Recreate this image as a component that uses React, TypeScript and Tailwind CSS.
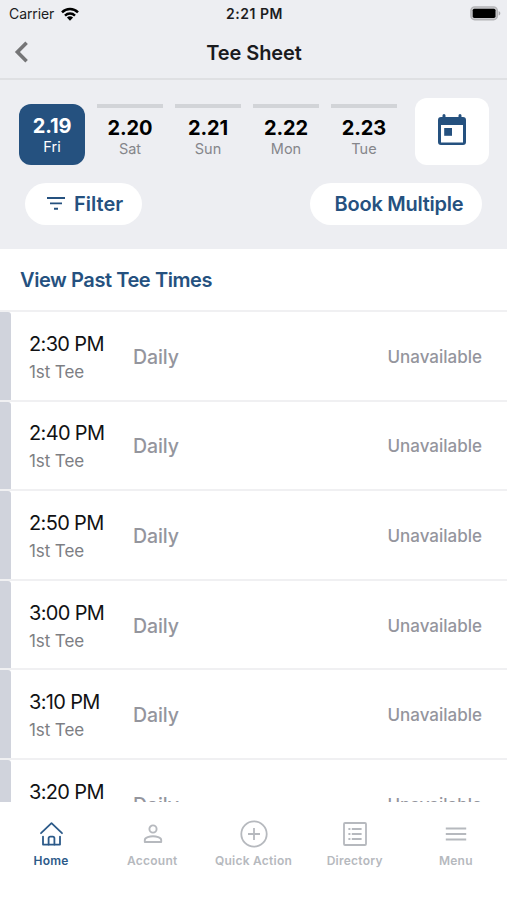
import clsx from "clsx";
import type { ReactNode } from "react";

const days = [
  { date: "2.19", day: "Fri" },
  { date: "2.20", day: "Sat" },
  { date: "2.21", day: "Sun" },
  { date: "2.22", day: "Mon" },
  { date: "2.23", day: "Tue" },
];

const teeTimes = ["2:30 PM", "2:40 PM", "2:50 PM", "3:00 PM", "3:10 PM", "3:20 PM"];

const tabs: { label: string; icon: ReactNode }[] = [
  {
    label: "Home",
    icon: (
      <svg width="28" height="28" viewBox="0 0 28 28" fill="none" stroke="currentColor" strokeWidth="1.8" strokeLinecap="round" strokeLinejoin="round">
        <path d="M3 13.2 13.5 3.2l10.500 10" />
        <path d="M5 16.6v8h5.600v-6.400a1.600 1.600 0 0 1 1.600-1.600h2.600a1.600 1.600 0 0 1 1.600 1.600v6.400h5.600v-8" />
        <path d="M10.6 24.6h5.800" />
      </svg>
    ),
  },
  {
    label: "Account",
    icon: (
      <svg width="28" height="28" viewBox="0 0 28 28" fill="none" stroke="currentColor" strokeWidth="1.9">
        <circle cx="14" cy="9" r="3.6" />
        <path d="M5.8 22v-2c0-2.6 5.1-3.8 8.2-3.8s8.2 1.2 8.2 3.8v2z" strokeLinejoin="round" />
      </svg>
    ),
  },
  {
    label: "Quick Action",
    icon: (
      <svg width="28" height="28" viewBox="0 0 28 28" fill="none" stroke="currentColor" strokeWidth="1.8">
        <circle cx="14" cy="14" r="12.7" />
        <path d="M14 8v12M8 14h12" />
      </svg>
    ),
  },
  {
    label: "Directory",
    icon: (
      <svg width="28" height="28" viewBox="0 0 28 28" fill="none" stroke="currentColor" strokeWidth="1.8">
        <rect x="3" y="3" width="22" height="22" rx="1" />
        <path d="M7.4 9h2M7.4 14h2M7.4 19h2M10.8 9h9.8M10.8 14h9.8M10.8 19h9.8" />
      </svg>
    ),
  },
  {
    label: "Menu",
    icon: (
      <svg width="28" height="28" viewBox="0 0 28 28" fill="none" stroke="currentColor" strokeWidth="2">
        <path d="M3.8 8.4h20.4M3.8 14h20.4M3.8 19.6h20.4" />
      </svg>
    ),
  },
];

function StatusBar() {
  return (
    <div className="grid h-7 grid-cols-3 items-center pr-[6px] pl-[9px] text-[#1c1c1e]">
      <div className="-mt-px flex items-center gap-[7px]">
        <span className="text-[14px] tracking-[-0.1px]">Carrier</span>
        <svg width="18" height="14" viewBox="0 0 18 14" fill="none" stroke="#000" strokeWidth="2.5">
          <path d="M1 5.3a11.6 11.6 0 0 1 16 0" />
          <path d="M4 8.6a7.3 7.3 0 0 1 10 0" />
          <path d="M9 13.8 5.9 10.6a4.5 4.5 0 0 1 6.2 0z" fill="#000" stroke="none" />
        </svg>
      </div>
      <span className="-mt-px -mr-px ml-[-2px] text-center text-[14px] font-semibold tracking-[0.5px]">2:21 PM</span>
      <svg className="-mt-px justify-self-end" width="31" height="15" viewBox="0 0 31 15">
        <rect x="0.9" y="0.9" width="26.4" height="12.8" rx="3.8" fill="#c9c9cc" stroke="#b3b3b6" strokeWidth="1.4" />
        <rect x="2.7" y="2.7" width="22.8" height="9.2" rx="1.6" fill="#000" />
        <path d="M28.6 5v4.6c1-.4 1.7-1.3 1.7-2.3s-.7-1.9-1.7-2.3z" fill="#a9a9ac" />
      </svg>
    </div>
  );
}

function TitleBar() {
  return (
    <header className="relative flex h-[52px] items-center justify-center border-b-2 border-[#dfe0e3]">
      <button className="absolute top-[13px] left-[14px]" aria-label="Back">
        <svg width="16" height="22" viewBox="0 0 16 22" fill="none" stroke="#757577" strokeWidth="3.6">
          <path d="M12.6 1.8 3.4 11l9.2 9.2" />
        </svg>
      </button>
      <h1 className="pl-px text-[20px] font-semibold tracking-[-0.1px] text-[#1a1b1e]">Tee Sheet</h1>
    </header>
  );
}

function DayPicker() {
  return (
    <div className="flex pt-[17.5px] pl-[19px]">
      <div className="flex gap-3 pt-[6px]">
        {days.map((d, i) => (
          <button
            key={d.date}
            className={clsx(
              "flex h-[61px] w-[66px] flex-col items-center",
              i === 0
                ? "rounded-[12px] bg-[#25517f] pt-[10px] text-white"
                : "border-t-4 border-[#d2d4d8] pt-[8px] text-black",
            )}
          >
            <span className="text-[20px] leading-6 font-bold tracking-[-0.1px]">{d.date}</span>
            <span className={clsx("text-[14.5px] leading-[18px]", i === 0 ? "text-white" : "text-[#85868b]")}>
              {d.day}
            </span>
          </button>
        ))}
      </div>
      <button className="ml-[18px] flex h-[67px] w-[74px] items-center justify-center rounded-[12px] bg-white pb-[3px]" aria-label="Calendar">
        <svg width="28" height="31" viewBox="0 0 28 31" fill="#25517f">
          <path
            fillRule="evenodd"
            d="M6 0a1.5 1.5 0 0 1 1.5 1.5V3h13V1.5a1.5 1.5 0 0 1 3 0V3H25a3 3 0 0 1 3 3v22a3 3 0 0 1-3 3H3a3 3 0 0 1-3-3V6a3 3 0 0 1 3-3h1.5V1.5A1.5 1.5 0 0 1 6 0zM3 11v17.5h22V11z"
          />
          <path d="M6.2 14h7.8v7.8H6.2z" />
        </svg>
      </button>
    </div>
  );
}

function Actions() {
  return (
    <div className="mt-[18px] flex justify-between pr-[25px] pl-[25px] text-[20px] font-semibold text-[#25517f]">
      <button className="flex h-[42px] w-[117px] items-center gap-[9px] rounded-full bg-white pl-[22px]">
        <svg width="18" height="13" viewBox="0 0 18 13" fill="none" stroke="currentColor" strokeWidth="1.9">
          <path d="M0 1h18M3 6.4h12M7 11.8h4" />
        </svg>
        Filter
      </button>
      <button className="h-[42px] w-[172px] rounded-full bg-white pl-[6px] tracking-[-0.25px] whitespace-nowrap">
        Book Multiple
      </button>
    </div>
  );
}

function TeeTimeRow({ time }: { time: string }) {
  return (
    <li className="flex h-[89.6px] shrink-0 border-t-2 border-[#f0f0f2]">
      <div className="w-[11px] rounded-tr-[3px] bg-[#d0d3dc]" />
      <div className="flex flex-1 pr-[25px] pl-[18px]">
        <div className="w-[104px] pt-[17.9px]">
          <p className="text-[20px] leading-7 tracking-[-0.65px] text-[#111214]">{time}</p>
          <p className="text-[17px] leading-7 tracking-[-0.1px] text-[#7d7e83]">1st Tee</p>
        </div>
        <p className="pt-[30.9px] text-[19.5px] leading-7 font-medium tracking-[-0.1px] text-[#94959d]">Daily</p>
        <p className="ml-auto pt-[30.9px] text-[17px] leading-7 font-medium text-[#94959d]">Unavailable</p>
      </div>
    </li>
  );
}

function TabBar() {
  return (
    <nav className="grid h-[98px] grid-cols-5 bg-white pt-[18px] pl-px">
      {tabs.map((tab, i) => (
        <button
          key={tab.label}
          className={clsx("flex flex-col items-center gap-[4px]", i === 0 ? "text-[#2c5a89]" : "text-[#b6b9be]")}
        >
          {tab.icon}
          <span className="mr-px text-[12px] leading-[18px] font-semibold tracking-[0.25px] whitespace-nowrap">{tab.label}</span>
        </button>
      ))}
    </nav>
  );
}

export default function App() {
  return (
    <div className="flex h-[900px] w-[507px] flex-col overflow-hidden bg-white font-['Inter',sans-serif]">
      <div className="h-[249px] shrink-0 bg-[#edeef2]">
        <StatusBar />
        <TitleBar />
        <DayPicker />
        <Actions />
      </div>
      <main className="flex h-[553px] shrink-0 flex-col overflow-hidden">
        <div className="flex h-[61px] shrink-0 items-center pl-5">
          <a className="text-[20px] font-semibold tracking-[-0.42px] text-[#25517f]">View Past Tee Times</a>
        </div>
        <ul className="flex flex-col">
          {teeTimes.map((time) => (
            <TeeTimeRow key={time} time={time} />
          ))}
        </ul>
      </main>
      <TabBar />
    </div>
  );
}
